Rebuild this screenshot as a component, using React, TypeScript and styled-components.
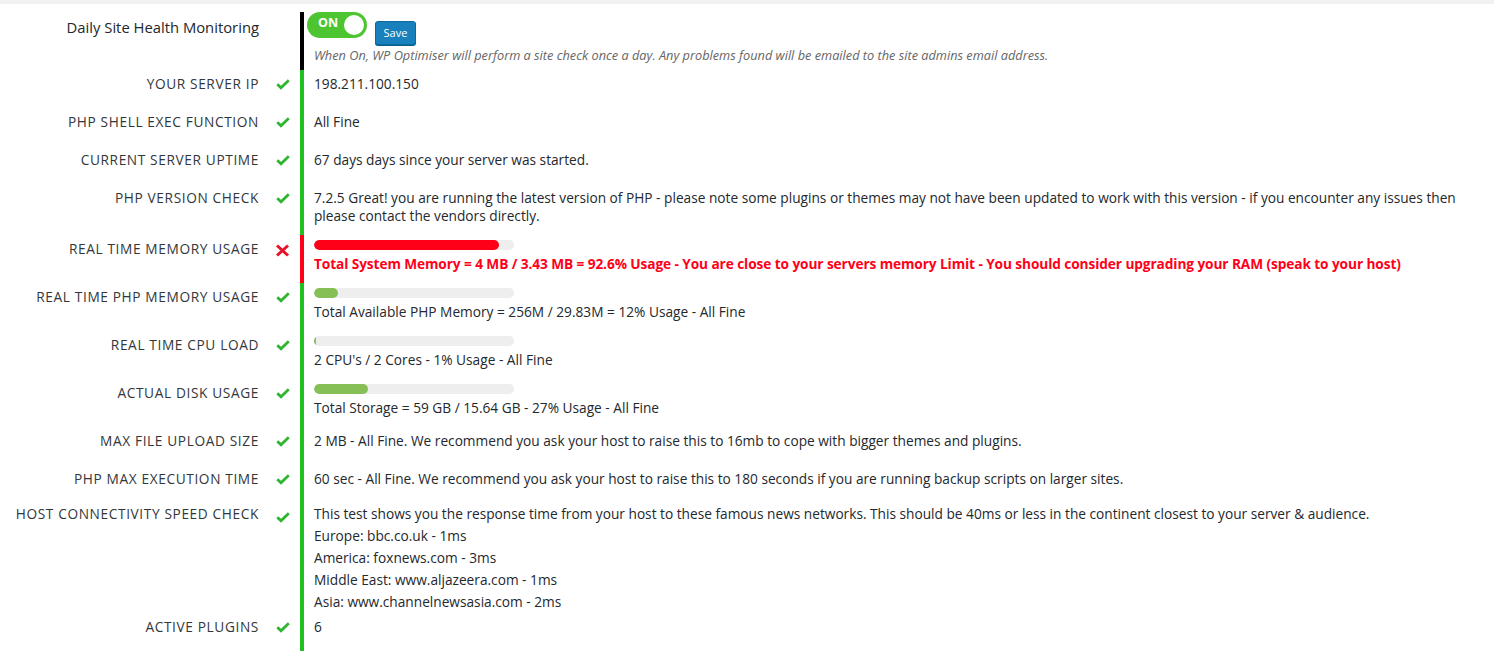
import React from "react";
import styled, { createGlobalStyle } from "styled-components";

const GlobalStyle = createGlobalStyle`
  html, body { margin: 0; padding: 0; background: #ffffff; }
  body { font-family: "Open Sans", "Noto Sans", sans-serif; color: #23282d; }
`;

const GREEN = "#1fc01f";
const RED = "#ff0019";

const Page = styled.div`
  width: 1494px;
  min-height: 661px;
  background: #fff;
`;

const TopStrip = styled.div`
  height: 4px;
  background: #f1f1f1;
`;

const Table = styled.div`
  margin-top: 8px;
  display: flex;
  flex-direction: column;
`;

const Row = styled.div`
  display: grid;
  grid-template-columns: 259px 41px 1fr;
  align-items: start;
`;

const Label = styled.div<{ $top?: number; $caps?: boolean }>`
  text-align: right;
  font-size: ${(p) => (p.$caps ? "13.7px" : "14.8px")};
  line-height: 18px;
  color: ${(p) => (p.$caps ? "#32373c" : "#23282d")};
  letter-spacing: ${(p) => (p.$caps ? "0.62px" : "0")};
  padding: ${(p) => p.$top ?? 5}px 0 15px 0;
  white-space: nowrap;
`;

const IconCell = styled.div<{ $top?: number }>`
  display: flex;
  justify-content: center;
  padding: ${(p) => p.$top ?? 9}px 0 0 6px;
`;

const Content = styled.div<{ $state: "dark" | "ok" | "bad"; $pad?: string; $lh?: number }>`
  align-self: stretch;
  border-left: 4px solid
    ${(p) => (p.$state === "dark" ? "#000" : p.$state === "bad" ? RED : GREEN)};
  padding: ${(p) => p.$pad ?? "5px 20px 10px 10px"};
  font-size: 13.7px;
  line-height: ${(p) => p.$lh ?? 18}px;
  color: #23282d;
`;

const ToggleLine = styled.div`
  display: flex;
  align-items: flex-start;
  gap: 8px;
`;

const Toggle = styled.div`
  position: relative;
  width: 60px;
  height: 26px;
  border-radius: 13px;
  background: #4cc530;
  color: #fff;
  font-weight: 700;
  font-size: 12.5px;
  line-height: 22px;
  padding-left: 11px;
  box-sizing: border-box;
`;

const Knob = styled.span`
  position: absolute;
  right: 3px;
  top: 3px;
  width: 20px;
  height: 20px;
  border-radius: 50%;
  background: #fff;
`;

const SaveButton = styled.button`
  margin-top: 9px;
  width: 41px;
  height: 24px;
  padding: 0;
  border: 1px solid #0b6a9f;
  border-radius: 3px;
  background: #1880bc;
  color: #fff;
  font-family: "Open Sans", sans-serif;
  font-size: 11px;
  line-height: 20px;
  box-shadow: 0 1px 0 #0a5f8f;
`;

const Hint = styled.div`
  margin-top: 1px;
  padding-left: 7px;
  font-style: italic;
  font-size: 12.75px;
  color: #666;
`;

const Bar = styled.div`
  width: 200px;
  height: 10px;
  border-radius: 5px;
  background: #eeeeee;
  overflow: hidden;
  margin-bottom: 5px;
`;

const Fill = styled.div<{ $bad?: boolean }>`
  height: 100%;
  border-radius: 5px;
  background: ${(p) => (p.$bad ? RED : "#86bf55")};
`;

const Alert = styled.div`
  color: ${RED};
  font-weight: 700;
  letter-spacing: -0.1px;
`;

const Check = () => (
  <svg width="14" height="11" viewBox="0 0 14 11">
    <polyline
      points="1.3,5.2 5,8.8 12.8,1.2"
      fill="none"
      stroke="#2db52d"
      strokeWidth="2.7"
    />
  </svg>
);

const Cross = () => (
  <svg width="15" height="13" viewBox="0 0 15 13">
    <path d="M2 1.5 L13 11.5 M13 1.5 L2 11.5" stroke="#e8132b" strokeWidth="3" />
  </svg>
);

type Item = {
  label: string;
  ok: boolean;
  bar?: number;
  lines: string[];
};

const items: Item[] = [
  { label: "YOUR SERVER IP", ok: true, lines: ["198.211.100.150"] },
  { label: "PHP SHELL EXEC FUNCTION", ok: true, lines: ["All Fine"] },
  {
    label: "CURRENT SERVER UPTIME",
    ok: true,
    lines: ["67 days days since your server was started."],
  },
  {
    label: "PHP VERSION CHECK",
    ok: true,
    lines: [
      "7.2.5 Great! you are running the latest version of PHP - please note some plugins or themes may not have been updated to work with this version - if you encounter any issues then please contact the vendors directly.",
    ],
  },
  {
    label: "REAL TIME MEMORY USAGE",
    ok: false,
    bar: 92.6,
    lines: [
      "Total System Memory = 4 MB / 3.43 MB = 92.6% Usage - You are close to your servers memory Limit - You should consider upgrading your RAM (speak to your host)",
    ],
  },
  {
    label: "REAL TIME PHP MEMORY USAGE",
    ok: true,
    bar: 12,
    lines: ["Total Available PHP Memory = 256M / 29.83M = 12% Usage - All Fine"],
  },
  {
    label: "REAL TIME CPU LOAD",
    ok: true,
    bar: 1,
    lines: ["2 CPU's / 2 Cores - 1% Usage - All Fine"],
  },
  {
    label: "ACTUAL DISK USAGE",
    ok: true,
    bar: 27,
    lines: ["Total Storage = 59 GB / 15.64 GB - 27% Usage - All Fine"],
  },
  {
    label: "MAX FILE UPLOAD SIZE",
    ok: true,
    lines: [
      "2 MB - All Fine. We recommend you ask your host to raise this to 16mb to cope with bigger themes and plugins.",
    ],
  },
  {
    label: "PHP MAX EXECUTION TIME",
    ok: true,
    lines: [
      "60 sec - All Fine. We recommend you ask your host to raise this to 180 seconds if you are running backup scripts on larger sites.",
    ],
  },
];

export default function App() {
  return (
    <Page>
      <GlobalStyle />
      <TopStrip />
      <Table>
        <Row>
          <Label $top={6}>Daily Site Health Monitoring</Label>
          <div />
          <Content $state="dark" $pad="0 20px 6px 3px">
            <ToggleLine>
              <Toggle>
                ON
                <Knob />
              </Toggle>
              <SaveButton>Save</SaveButton>
            </ToggleLine>
            <Hint>
              When On, WP Optimiser will perform a site check once a day. Any problems found will be emailed to the site admins email address.
            </Hint>
          </Content>
        </Row>

        {items.map((it) => (
          <Row key={it.label}>
            <Label $caps>{it.label}</Label>
            <IconCell>{it.ok ? <Check /> : <Cross />}</IconCell>
            <Content $state={it.ok ? "ok" : "bad"}>
              {it.bar !== undefined && (
                <Bar>
                  <Fill $bad={!it.ok} style={{ width: `${it.bar}%` }} />
                </Bar>
              )}
              {it.lines.map((l) =>
                it.ok ? <div key={l}>{l}</div> : <Alert key={l}>{l}</Alert>
              )}
            </Content>
          </Row>
        ))}

        <Row>
          <Label $caps $top={2}>HOST CONNECTIVITY SPEED CHECK</Label>
          <IconCell $top={9}>
            <Check />
          </IconCell>
          <Content $state="ok" $pad="0 20px 0 10px" $lh={22}>
            <div>
              This test shows you the response time from your host to these famous news networks. This should be 40ms or less in the continent closest to your server &amp; audience.
            </div>
            <div>Europe: bbc.co.uk - 1ms</div>
            <div>America: foxnews.com - 3ms</div>
            <div>Middle East: www.aljazeera.com - 1ms</div>
            <div>Asia: www.channelnewsasia.com - 2ms</div>
          </Content>
        </Row>

        <Row>
          <Label $caps>ACTIVE PLUGINS</Label>
          <IconCell>
            <Check />
          </IconCell>
          <Content $state="ok">6</Content>
        </Row>
      </Table>
    </Page>
  );
}
